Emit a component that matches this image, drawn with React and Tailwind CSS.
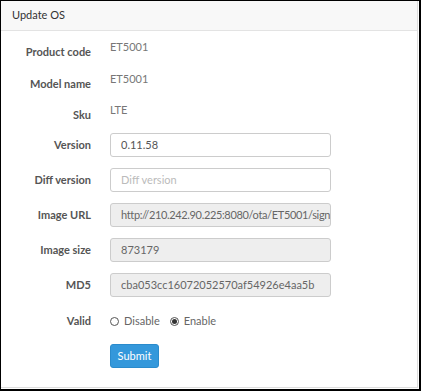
import React from 'react';

const StaticRow = ({ label, value, className }) => (
    <div className={`flex h-[24px] ${className}`}>
        <div className="w-[90px] shrink-0 text-right font-bold text-[#555] leading-[24px]">{label}</div>
        <div className="ml-[19px] text-[#777] leading-[14px]">{value}</div>
    </div>
);

const InputRow = ({ label, value, placeholder, readOnly, tight, className }) => (
    <div className={`flex items-center h-[24px] ${className}`}>
        <div className="w-[90px] shrink-0 text-right font-bold text-[#555]">{label}</div>
        <div
            className={`ml-[19px] w-[221px] h-[24px] rounded-[3px] border border-[#ccc] pl-[10px] flex items-center overflow-hidden whitespace-nowrap ${
                readOnly ? 'bg-[#eeeeee] text-[#666]' : 'bg-white text-[#555]'
            } ${tight ? 'tracking-[-0.35px]' : ''}`}
        >
            {value ? <span>{value}</span> : <span className="text-[#bbb]">{placeholder}</span>}
        </div>
    </div>
);

const Radio = ({ checked, label }) => (
    <label className="flex items-center gap-[5px]">
        <span className="w-[9px] h-[9px] rounded-full border border-[#555] flex items-center justify-center bg-white">
            {checked && <span className="w-[5px] h-[5px] rounded-full bg-[#333]"></span>}
        </span>
        <span className="text-[#666]">{label}</span>
    </label>
);

export default function App() {
    return (
        <div className="w-[421px] h-[391px] bg-black pl-[1px] pt-[1px] pr-[2px] pb-[2px]" style={{ fontFamily: 'Lato, "Open Sans", sans-serif' }}>
            <div className="w-full h-full bg-white pr-[1px] pb-[1px]">
                <div className="w-full h-full border-r border-b border-[#ddd] text-[11px]">
                    {/* Header */}
                    <div className="h-[30px] bg-[#f8f8f8] border-b border-[#e3e3e3] flex items-center pl-[11px] text-[#333]">
                        Update OS
                    </div>

                    <div className="pt-[9px]">
                        <StaticRow label="Product code" value="ET5001" className="mt-0" />
                        <StaticRow label="Model name" value="ET5001" className="mt-[8px]" />
                        <StaticRow label="Sku" value="LTE" className="mt-[7px]" />
                        <InputRow label="Version" value="0.11.58" className="mt-[6px]" />
                        <InputRow label="Diff version" placeholder="Diff version" className="mt-[11px]" />
                        <InputRow label="Image URL" value="http://210.242.90.225:8080/ota/ET5001/sign" readOnly tight className="mt-[11px]" />
                        <InputRow label="Image size" value="873179" readOnly className="mt-[11px]" />
                        <InputRow label="MD5" value="cba053cc16072052570af54926e4aa5b" readOnly className="mt-[11px]" />

                        <div className="flex items-center h-[24px] mt-[12px]">
                            <div className="w-[90px] shrink-0 text-right font-bold text-[#555]">Valid</div>
                            <div className="ml-[19px] flex items-center gap-[10px]">
                                <Radio label="Disable" />
                                <Radio label="Enable" checked />
                            </div>
                        </div>

                        <div className="flex mt-[11px]">
                            <button className="ml-[109px] w-[49px] h-[24px] rounded-[3px] bg-[#3498db] border border-[#2a8bcc] text-white text-[11px]">
                                Submit
                            </button>
                        </div>
                    </div>
                </div>
            </div>
        </div>
    );
}
